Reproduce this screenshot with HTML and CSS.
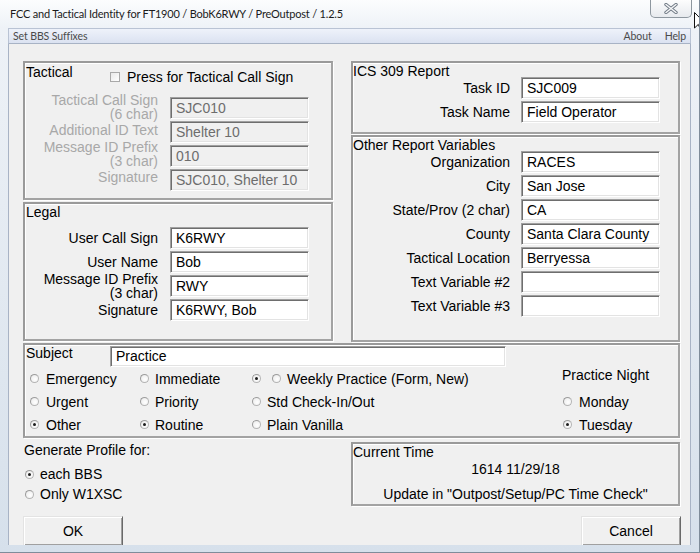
FILE: index.html
```html
<!DOCTYPE html>
<html>
<head>
<meta charset="utf-8">
<title>FCC and Tactical Identity</title>
<link rel="stylesheet" href="styles.css">
</head>
<body>
<div class="window">
  <div class="titlebar">
    <span class="title">FCC and Tactical Identity for FT1900 / BobK6RWY / PreOutpost / 1.2.5</span>
    <div class="close">
      <svg width="14" height="11" viewBox="0 0 14 11">
        <path d="M2 1.5 L12 9.5 M12 1.5 L2 9.5" stroke="#707a85" stroke-width="3.4" stroke-linecap="round"/>
        <path d="M2 1.5 L12 9.5 M12 1.5 L2 9.5" stroke="#f6f7f8" stroke-width="1.5" stroke-linecap="round"/>
      </svg>
    </div>
  </div>
  <div class="body">
    <div class="menubar">
      <span class="menu">Set BBS Suffixes</span>
      <span class="menu push">About</span>
      <span class="menu">Help</span>
    </div>
    <div class="client">
      <div class="top">
        <div class="col">
          <div class="frame tactical">
            <div class="head head-tac">
              <span class="ftitle tac-title">Tactical</span>
              <label class="check"><span class="cb"></span>Press for Tactical Call Sign</label>
            </div>
            <div class="grid">
              <div class="lbl dis-lbl t1">Tactical Call Sign<br>(6 char)</div>
              <div class="tb dis">SJC010</div>
              <div class="lbl dis-lbl t2">Additional ID Text</div>
              <div class="tb dis">Shelter 10</div>
              <div class="lbl dis-lbl t3">Message ID Prefix<br>(3 char)</div>
              <div class="tb dis">010</div>
              <div class="lbl dis-lbl t4">Signature</div>
              <div class="tb dis">SJC010, Shelter 10</div>
            </div>
          </div>
          <div class="frame legal">
            <div class="head head-legal"><span class="ftitle">Legal</span></div>
            <div class="grid">
              <div class="lbl">User Call Sign</div>
              <div class="tb">K6RWY</div>
              <div class="lbl">User Name</div>
              <div class="tb">Bob</div>
              <div class="lbl">Message ID Prefix<br>(3 char)</div>
              <div class="tb">RWY</div>
              <div class="lbl">Signature</div>
              <div class="tb">K6RWY, Bob</div>
            </div>
          </div>
        </div>
        <div class="col">
          <div class="frame ics">
            <div class="rtitle">ICS 309 Report</div>
            <div class="grid rgrid">
              <div class="lbl">Task ID</div>
              <div class="tb">SJC009</div>
              <div class="lbl">Task Name</div>
              <div class="tb">Field Operator</div>
            </div>
          </div>
          <div class="frame other">
            <div class="rtitle">Other Report Variables</div>
            <div class="grid rgrid">
              <div class="lbl">Organization</div>
              <div class="tb">RACES</div>
              <div class="lbl">City</div>
              <div class="tb">San Jose</div>
              <div class="lbl">State/Prov (2 char)</div>
              <div class="tb">CA</div>
              <div class="lbl">County</div>
              <div class="tb">Santa Clara County</div>
              <div class="lbl">Tactical Location</div>
              <div class="tb">Berryessa</div>
              <div class="lbl">Text Variable #2</div>
              <div class="tb"></div>
              <div class="lbl">Text Variable #3</div>
              <div class="tb"></div>
            </div>
          </div>
        </div>
      </div>

      <div class="frame subject">
        <div class="subj-head">
          <span class="ftitle subj-title">Subject</span>
          <div class="tb subj-tb">Practice</div>
        </div>
        <div class="radios">
          <div class="rcol c1">
            <div class="ritem"><span class="rb"></span>Emergency</div>
            <div class="ritem"><span class="rb"></span>Urgent</div>
            <div class="ritem"><span class="rb on"></span>Other</div>
          </div>
          <div class="rcol c2">
            <div class="ritem"><span class="rb"></span>Immediate</div>
            <div class="ritem"><span class="rb"></span>Priority</div>
            <div class="ritem"><span class="rb on"></span>Routine</div>
          </div>
          <div class="rcol c3">
            <div class="ritem"><span class="rb on rb-wide"></span><span class="rb"></span>Weekly Practice (Form, New)</div>
            <div class="ritem"><span class="rb"></span>Std Check-In/Out</div>
            <div class="ritem"><span class="rb"></span>Plain Vanilla</div>
          </div>
          <div class="rcol c4">
            <div class="ritem pn-title">Practice Night</div>
            <div class="ritem"><span class="rb"></span>Monday</div>
            <div class="ritem"><span class="rb on"></span>Tuesday</div>
          </div>
        </div>
      </div>

      <div class="bottom">
        <div class="profile">
          <div class="gen-title">Generate Profile for:</div>
          <div class="gen-list">
            <div class="gitem"><span class="rb on"></span>each BBS</div>
            <div class="gitem"><span class="rb"></span>Only W1XSC</div>
          </div>
        </div>
        <div class="frame timebox">
          <div class="time-title">Current Time</div>
          <div class="time-now">1614 11/29/18</div>
          <div class="time-note">Update in "Outpost/Setup/PC Time Check"</div>
        </div>
      </div>

      <div class="buttons">
        <div class="btn">OK</div>
        <div class="btn">Cancel</div>
      </div>
    </div>
  </div>
  <svg class="cursor" width="12" height="20" viewBox="0 0 12 20">
    <path d="M0.5 0.5 L0.5 16 L4.3 12.4 L6.8 18.4 L9 17.5 L6.6 11.6 L11.4 11.6 Z" fill="#ffffff" stroke="#111111" stroke-width="1"/>
  </svg>
</div>
</body>
</html>
```

FILE: styles.css
```css
* {
  box-sizing: border-box;
}

html,
body {
  margin: 0;
  padding: 0;
}

body {
  width: 700px;
  height: 553px;
  overflow: hidden;
  background: #ffffff;
  font-family: "Liberation Sans", Arial, sans-serif;
  font-size: 14px;
  color: #000;
}

.window {
  position: relative;
  width: 700px;
  height: 553px;
  display: flex;
  flex-direction: column;
  overflow: hidden;
  background: linear-gradient(to bottom, #fcfdfe 0px, #eef2f7 28px, #d6e0eb 100%);
  border-right: 1px solid #7f8c9a;
  border-bottom: 1px solid #7f8c9a;
}

.cursor {
  position: absolute;
  left: 694px;
  top: 12px;
}

/* ---------- title bar ---------- */
.titlebar {
  height: 28px;
  flex: none;
  display: flex;
  align-items: flex-start;
}

.title {
  font-family: Lato, "Noto Sans", sans-serif;
  font-size: 11px;
  letter-spacing: -0.2px;
  line-height: 16px;
  margin: 6px 0 0 10px;
  color: #1b1b1b;
  white-space: nowrap;
}

.close {
  margin-left: auto;
  margin-right: 7px;
  width: 42px;
  height: 18px;
  border: 1px solid #8e979f;
  border-top: none;
  border-radius: 0 0 5px 5px;
  background: linear-gradient(#fdfdfd, #e7eaee);
  display: flex;
  align-items: center;
  justify-content: center;
}

/* ---------- window body ---------- */
.body {
  flex: 1;
  display: flex;
  flex-direction: column;
  margin: 0 8px 7px 8px;
  min-height: 0;
}

.menubar {
  height: 16px;
  flex: none;
  display: flex;
  align-items: center;
  padding: 0 4px 0 4px;
  background: linear-gradient(#eef2fa, #dbe2f1);
  border: 1px solid #b9c3d4;
  border-bottom-color: #a8b3c5;
  font-family: Lato, "Noto Sans", sans-serif;
  font-size: 10.5px;
  letter-spacing: -0.1px;
  color: #4a4a4a;
}

.menu {
  white-space: nowrap;
}

.menu.push {
  margin-left: auto;
  margin-right: 13px;
}

.client {
  flex: 1;
  min-height: 0;
  overflow: hidden;
  background: #f0f0f0;
  border-left: 1px solid #a8b3c5;
  border-right: 1px solid #a8b3c5;
  padding: 17px 0 0 14px;
}

/* ---------- frames ---------- */
.top,
.bottom {
  display: grid;
  grid-template-columns: 310px 329px;
  column-gap: 18px;
}

.col {
  display: flex;
  flex-direction: column;
}

.frame {
  border: 2px solid #a3a3a3;
  border-top-color: #9a9a9a;
  border-left-color: #9a9a9a;
  box-shadow: inset 1px 1px 0 #ffffff, 1px 1px 0 #ffffff;
}

.tactical {
  height: 139px;
}

.legal {
  height: 139px;
  margin-top: 2px;
}

.ics {
  height: 73px;
}

.other {
  height: 207px;
  margin-top: 1px;
}

.head {
  display: flex;
  align-items: flex-start;
}

.head-tac {
  height: 34px;
}

.head-legal {
  height: 23px;
}

.ftitle {
  line-height: 16px;
  margin-left: 1px;
  white-space: nowrap;
}

.tac-title {
  flex: 0 0 84px;
  margin-top: 1px;
}

.check {
  display: flex;
  align-items: center;
  margin-top: 6px;
  line-height: 16px;
  white-space: nowrap;
}

.cb {
  width: 10px;
  height: 10px;
  margin-right: 7px;
  border: 1px solid #a9a9a9;
  background: linear-gradient(135deg, #e9e9e9, #ffffff);
}

.rtitle {
  line-height: 14px;
  height: 14px;
  padding-top: 1px;
  white-space: nowrap;
}

.grid {
  display: grid;
  grid-template-columns: 133px 139px;
  column-gap: 12px;
  row-gap: 2px;
  grid-auto-rows: 22px;
}

.rgrid {
  grid-template-columns: 157px 139px;
  column-gap: 11px;
}

.lbl {
  text-align: right;
  line-height: 14px;
  align-self: center;
  white-space: nowrap;
}

/* tactical labels sit tighter than the rows, as in the original dialog */
.t1,
.t2,
.t3,
.t4 {
  align-self: start;
}

.t1 {
  margin-top: -4px;
}

.t2 {
  margin-top: 2px;
}

.t3 {
  margin-top: -5px;
}

.t4 {
  margin-top: 1px;
}

.dis-lbl {
  color: #a8a8a8;
}

.tb {
  height: 22px;
  border: 1px solid;
  border-color: #a0a0a0 #ffffff #ffffff #a0a0a0;
  box-shadow: inset 1px 1px 0 #6e6e6e, inset -1px -1px 0 #e3e3e3;
  background: #ffffff;
  padding-left: 5px;
  line-height: 20px;
  white-space: nowrap;
  overflow: hidden;
}

.tb.dis {
  background: #f0f0f0;
  color: #6d6d6d;
}

/* ---------- subject ---------- */
.subject {
  height: 95px;
  margin-top: 1px;
  width: 657px;
}

.subj-head {
  display: flex;
  align-items: flex-start;
  height: 22px;
}

.subj-title {
  flex: 0 0 84px;
}

.subj-tb {
  width: 396px;
  height: 21px;
  margin-top: 1px;
  line-height: 19px;
}

.radios {
  display: flex;
  padding-left: 5px;
}

.rcol {
  display: flex;
  flex-direction: column;
}

.c1 {
  width: 110px;
}

.c2 {
  width: 112px;
}

.c3 {
  width: 310px;
}

.c4 {
  width: 110px;
}

.ritem {
  height: 23px;
  display: flex;
  align-items: center;
  white-space: nowrap;
}

.pn-title {
  align-items: flex-start;
  line-height: 16px;
}

.c4 .ritem .rb {
  margin-left: 1px;
}

.rb {
  flex: none;
  position: relative;
  width: 9px;
  height: 9px;
  margin-right: 7px;
  border-radius: 50%;
  border: 1px solid #b4b4b4;
  border-top-color: #9c9c9c;
  border-left-color: #9c9c9c;
  background: radial-gradient(circle at 60% 60%, #ffffff 0%, #f4f4f4 50%, #e2e2e2 100%);
}

.rb.on::after {
  content: "";
  position: absolute;
  left: 2px;
  top: 2px;
  width: 3px;
  height: 3px;
  border-radius: 50%;
  background: #1c1c1c;
}

.rb-wide {
  margin-right: 11px;
}

.c2 .rb {
  margin-right: 6px;
}

.c3 .rb {
  margin-right: 6px;
}

.c3 .rb.rb-wide {
  margin-right: 11px;
}

/* ---------- bottom ---------- */
.bottom {
  margin-top: 4px;
}

.gen-title {
  line-height: 16px;
  margin-left: 1px;
}

.gen-list {
  margin-top: 6px;
  padding-left: 2px;
}

.gitem {
  height: 20px;
  display: flex;
  align-items: center;
  white-space: nowrap;
}

.gitem .rb {
  margin-right: 6px;
}

.timebox {
  height: 64px;
}

.time-title {
  line-height: 16px;
}

.time-now {
  line-height: 16px;
  margin-top: 1px;
  text-align: center;
}

.time-note {
  line-height: 16px;
  margin-top: 9px;
  text-align: center;
}

.buttons {
  display: flex;
  justify-content: space-between;
  width: 658px;
  margin-top: 10px;
}

.btn {
  width: 100px;
  height: 30px;
  display: flex;
  align-items: center;
  justify-content: center;
  background: #f0f0f0;
  border: 1px solid;
  border-color: #e3e3e3 #696969 #696969 #e3e3e3;
  box-shadow: inset 1px 1px 0 #ffffff, inset -1px -1px 0 #a0a0a0;
}
```
